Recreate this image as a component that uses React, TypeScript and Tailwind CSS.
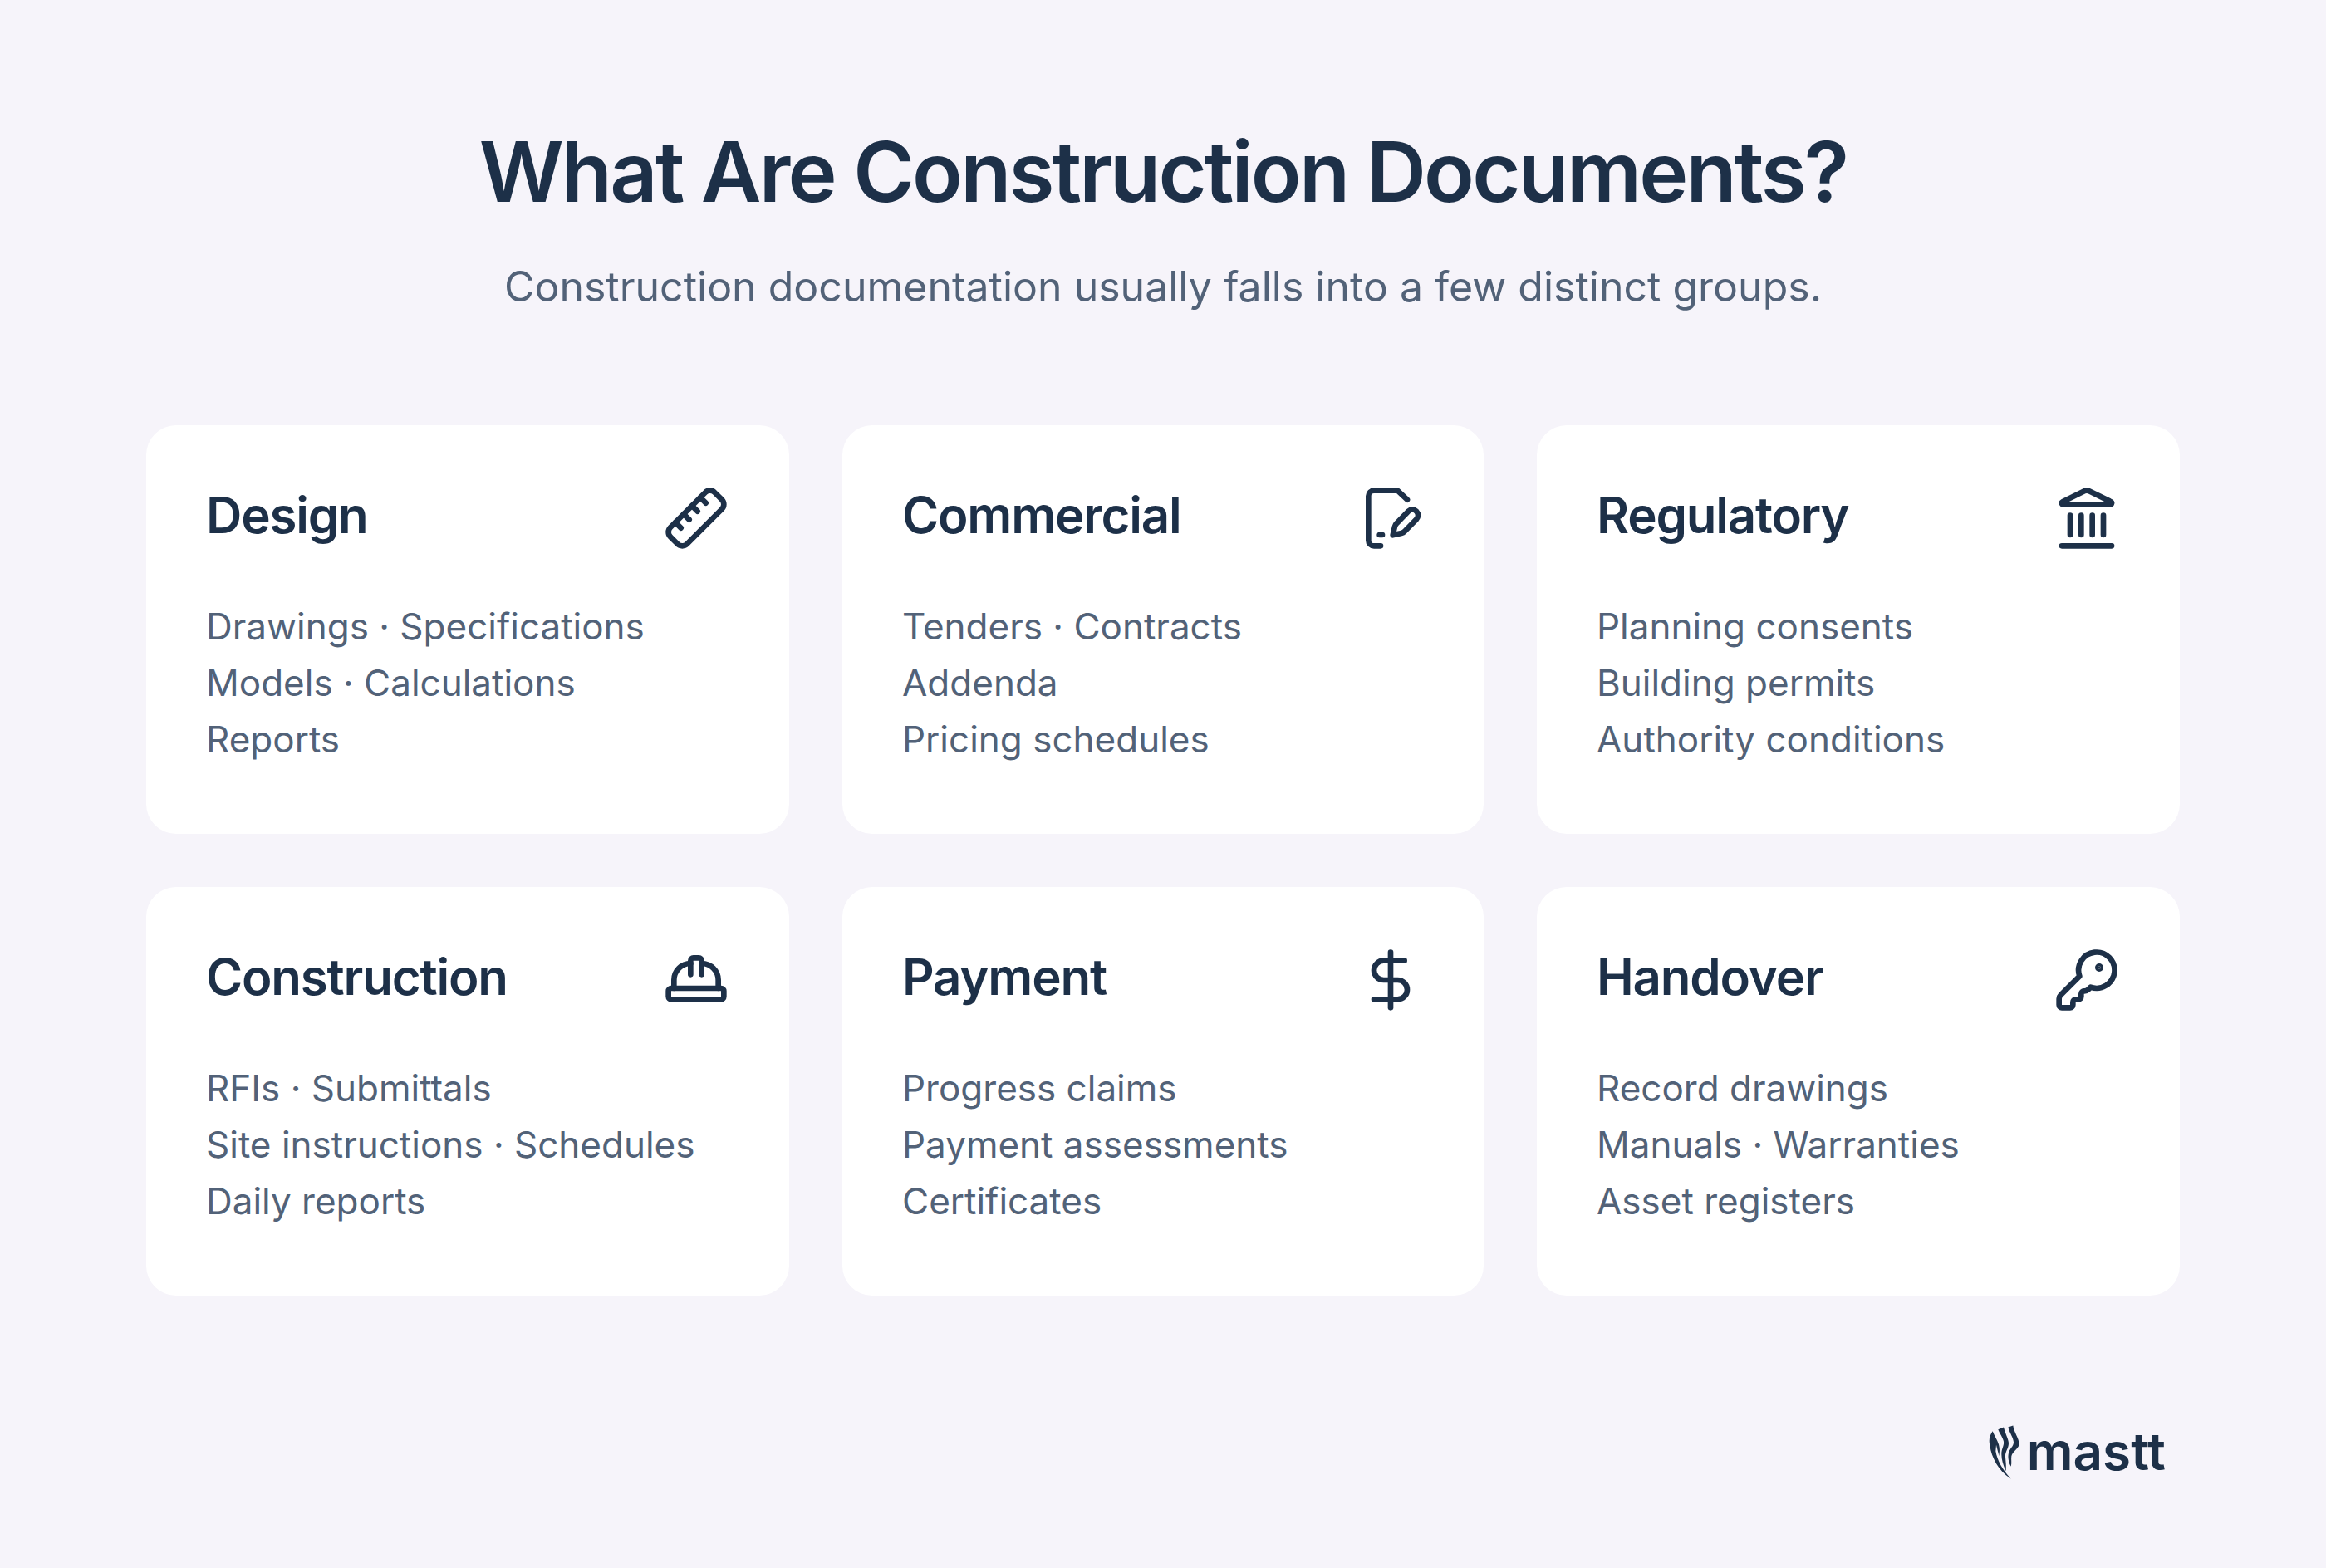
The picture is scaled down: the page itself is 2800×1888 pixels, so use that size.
import { DollarSign, HardHat, KeyRound, Landmark } from 'lucide-react'
import type { ReactNode } from 'react'

const INK = 'text-[#1d3048]'

function RulerIcon() {
  return (
    <svg viewBox="0 0 24 24" fill="none" stroke="currentColor" strokeWidth="2" strokeLinecap="round" strokeLinejoin="round" className={`h-20 w-20 ${INK}`}>
      <g transform="matrix(-1 0 0 1 24 0)">
        <path d="M21.3 15.3a2.4 2.4 0 0 1 0 3.4l-2.6 2.6a2.4 2.4 0 0 1-3.4 0L2.7 8.7a2.41 2.41 0 0 1 0-3.4l2.6-2.6a2.41 2.41 0 0 1 3.4 0Z" />
        <path d="m14.5 12.5 2-2" />
        <path d="m11.5 9.5 2-2" />
        <path d="m8.5 6.5 2-2" />
        <path d="m17.5 15.5 2-2" />
      </g>
    </svg>
  )
}

function ContractIcon() {
  return (
    <svg viewBox="0 0 24 24" fill="none" stroke="currentColor" strokeWidth="2" strokeLinecap="round" strokeLinejoin="round" className={`h-20 w-20 ${INK}`}>
      <path d="M8.4 22H6a2 2 0 0 1-2-2V4a2 2 0 0 1 2-2h8.5L18 5.3" />
      <path d="M8 18h1" />
      <path d="M18.4 9.5a2.05 2.05 0 1 1 2.9 2.9l-4.3 4.4a2.4 2.4 0 0 1-1.1.6l-3.1.7.7-3.1a2.4 2.4 0 0 1 .6-1.1Z" />
    </svg>
  )
}

function MasttMark() {
  return (
    <svg viewBox="70 50 120 200" className={`h-[67px] w-10 ${INK}`} fill="currentColor">
      <path d="M90 74c-10 14-15 30-10 52 6 44 32 92 76 120-30-32-50-68-55-100l2-22c3 14 8 28 10 40 3-22 2-30-1-42-5-16-15-30-22-48Z" />
      <path d="M110 68l20-8c6 24 18 44 18 58 0 20-14 30-12 50 1 16 4 32 2 50-10-22-16-42-16-60 0-22 10-30 8-46-2-14-14-28-20-44Z" />
      <path d="M146 60l18-6c2 22 22 48 22 66 0 16-24 28-28 44-2 12 2 24-2 38-8-18-12-32-8-50 4-16 18-22 18-38 0-14-16-36-20-54Z" />
    </svg>
  )
}

function Card({ title, icon, lines }: { title: string; icon: ReactNode; lines: string[] }) {
  return (
    <div className="h-[492px] rounded-[36px] bg-white px-[72px] pt-[72px]">
      <div className="flex h-20 items-start justify-between">
        <h2 className={`text-[60px] leading-[72px] font-semibold tracking-[-0.02em] ${INK}`}>{title}</h2>
        {icon}
      </div>
      <div className="mt-[56px] text-[44px] leading-[68px] text-[#526278]">
        {lines.map((line) => (
          <div key={line}>{line}</div>
        ))}
      </div>
    </div>
  )
}

const CARDS = [
  { title: 'Design', icon: <RulerIcon />, lines: ['Drawings · Specifications', 'Models · Calculations', 'Reports'] },
  { title: 'Commercial', icon: <ContractIcon />, lines: ['Tenders · Contracts', 'Addenda', 'Pricing schedules'] },
  { title: 'Regulatory', icon: <Landmark className={`h-20 w-20 ${INK}`} />, lines: ['Planning consents', 'Building permits', 'Authority conditions'] },
  { title: 'Construction', icon: <HardHat className={`h-20 w-20 ${INK}`} />, lines: ['RFIs · Submittals', 'Site instructions · Schedules', 'Daily reports'] },
  { title: 'Payment', icon: <DollarSign className={`h-20 w-20 ${INK}`} />, lines: ['Progress claims', 'Payment assessments', 'Certificates'] },
  { title: 'Handover', icon: <KeyRound className={`h-20 w-20 ${INK}`} />, lines: ['Record drawings', 'Manuals · Warranties', 'Asset registers'] },
]

export default function App() {
  return (
    <div className="h-[1888px] w-[2800px] bg-[#f6f4fa] px-[176px] pt-[142px] font-['Inter',sans-serif]">
      <h1 className={`text-center text-[100px] leading-[130px] font-semibold tracking-[-0.028em] ${INK}`}>What Are Construction Documents?</h1>
      <p className="mt-[38px] text-center text-[50px] leading-[70px] text-[#526278]">
        Construction documentation usually falls into a few distinct groups.
      </p>
      <div className="mt-[132px] grid grid-cols-[774px_772px_774px] gap-x-16 gap-y-16">
        {CARDS.map((card) => (
          <Card key={card.title} {...card} />
        ))}
      </div>
      <div className="mt-[153px] flex items-center justify-end gap-[8px] pr-[17px]">
        <MasttMark />
        <span className={`text-[62px] leading-[70px] font-semibold ${INK}`}>mastt</span>
      </div>
    </div>
  )
}
